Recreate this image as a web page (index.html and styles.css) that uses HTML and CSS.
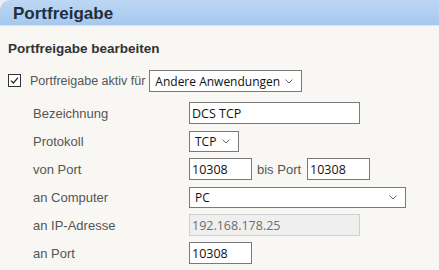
FILE: index.html
```html
<!DOCTYPE html>
<html lang="de">
<head>
<meta charset="utf-8">
<title>Portfreigabe</title>
<link rel="stylesheet" href="styles.css">
</head>
<body>
<div class="panel">
  <div class="titlebar">Portfreigabe</div>
  <div class="content">
    <h2 class="section-title">Portfreigabe bearbeiten</h2>
    <div class="active-row">
      <span class="checkbox"><svg width="11" height="11" viewBox="0 0 11 11"><path d="M2 5.6 L4.4 8 L9 2.6" fill="none" stroke="#222" stroke-width="1.2"/></svg></span>
      <span class="active-label">Portfreigabe aktiv für</span>
      <div class="select w-app"><span>Andere Anwendungen</span><svg class="chev" width="8" height="5" viewBox="0 0 8 5"><path d="M0.5 0.5 L4 4 L7.5 0.5" fill="none" stroke="#666" stroke-width="1"/></svg></div>
    </div>
    <div class="form">
      <span class="label">Bezeichnung</span>
      <div class="ctrl"><input class="input w-name" type="text" value="DCS TCP"></div>

      <span class="label">Protokoll</span>
      <div class="ctrl"><div class="select w-proto"><span>TCP</span><svg class="chev" width="8" height="5" viewBox="0 0 8 5"><path d="M0.5 0.5 L4 4 L7.5 0.5" fill="none" stroke="#666" stroke-width="1"/></svg></div></div>

      <span class="label">von Port</span>
      <div class="ctrl"><input class="input w-port" type="text" value="10308"><span class="inline-label">bis Port</span><input class="input w-port" type="text" value="10308"></div>

      <span class="label">an Computer</span>
      <div class="ctrl"><div class="select w-comp"><span>PC</span><svg class="chev" width="8" height="5" viewBox="0 0 8 5"><path d="M0.5 0.5 L4 4 L7.5 0.5" fill="none" stroke="#666" stroke-width="1"/></svg></div></div>

      <span class="label">an IP-Adresse</span>
      <div class="ctrl"><input class="input w-name" type="text" value="192.168.178.25" disabled></div>

      <span class="label">an Port</span>
      <div class="ctrl"><input class="input w-port" type="text" value="10308"></div>
    </div>
  </div>
</div>
</body>
</html>
```

FILE: styles.css
```css
html, body {
  margin: 0;
  padding: 0;
}
body {
  background: #eceff2;
  font-family: "Liberation Sans", Arial, sans-serif;
  width: 439px;
  height: 270px;
  overflow: hidden;
}
.panel {
  background: #f8f7f3;
  border-top-left-radius: 10px;
  overflow: hidden;
  height: 270px;
}
.titlebar {
  height: 25px;
  line-height: 27px;
  padding-left: 13px;
  background: linear-gradient(#bdd7f3, #a6c8ee);
  border-bottom: 1px solid #d9e6f3;
  color: #1f2e3e;
  font-size: 17px;
  font-weight: bold;
}
.content {
  padding: 0 0 0 8px;
}
.section-title {
  margin: 0;
  padding-top: 15px;
  font-size: 13.5px;
  line-height: 16px;
  font-weight: bold;
  color: #333;
}
.active-row {
  display: flex;
  align-items: center;
  margin-top: 13px;
  height: 22px;
}
.checkbox {
  box-sizing: border-box;
  width: 13px;
  height: 13px;
  border: 1px solid #333;
  background: #fff;
  display: flex;
  align-items: center;
  justify-content: center;
  margin-top: -2px;
}
.active-label {
  margin-left: 9px;
  font-size: 12.5px;
  color: #555;
}
.select {
  box-sizing: border-box;
  height: 22px;
  border: 1px solid #7a7a7a;
  background: #fff;
  display: flex;
  align-items: center;
  justify-content: space-between;
  padding: 0 8px 0 5px;
  font-family: "Open Sans", "Noto Sans", sans-serif;
  font-size: 12px;
  color: #111;
}
.select .chev {
  flex: none;
  margin-top: 1px;
}
.w-app {
  margin-left: 4px;
  width: 153px;
}
.w-proto {
  width: 50px;
  height: 21px;
}
.w-comp {
  width: 217px;
  height: 21px;
}
.form {
  display: grid;
  grid-template-columns: 156px auto;
  grid-auto-rows: 22px;
  row-gap: 6px;
  margin-top: 10px;
  padding-left: 25px;
}
.label {
  font-size: 13px;
  color: #555;
  align-self: center;
}
.ctrl {
  display: flex;
  align-items: center;
}
.input {
  box-sizing: border-box;
  height: 22px;
  margin: 0;
  border: 1px solid #7a7a7a;
  border-radius: 0;
  background: #fff;
  padding: 1px 0 0 2px;
  font-family: "Open Sans", "Noto Sans", sans-serif;
  font-size: 12.5px;
  color: #111;
  outline: none;
}
.input:disabled {
  background: #efefef;
  border-color: #cfcfcf;
  color: #6d6d6d;
}
.w-name {
  width: 171px;
}
.w-port {
  width: 63px;
}
.inline-label {
  font-size: 13px;
  color: #555;
  margin: 0 6px 0 5px;
}
```
